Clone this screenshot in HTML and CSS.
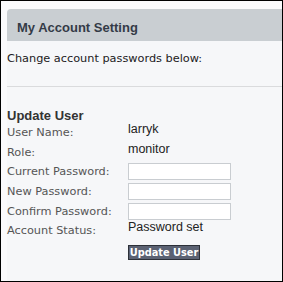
FILE: index.html
```html
<!DOCTYPE html>
<html lang="en">
<head>
    <meta charset="UTF-8">
    <title>My Account Setting</title>
    <link rel="stylesheet" href="styles.css">
</head>
<body>
<div class="panel">
    <div class="panel-header">My Account Setting</div>
    <p class="intro">Change account passwords below:</p>
    <hr class="divider">

    <!-- Update user form -->
    <h3 class="section-title">Update User</h3>
    <form class="user-form" onsubmit="return false;">
        <span class="field-label">User Name:</span>
        <span class="field-value">larryk</span>

        <span class="field-label">Role:</span>
        <span class="field-value">monitor</span>

        <label class="field-label" for="currentPassword">Current Password:</label>
        <input type="password" id="currentPassword">

        <label class="field-label" for="newPassword">New Password:</label>
        <input type="password" id="newPassword">

        <label class="field-label" for="confirmPassword">Confirm Password:</label>
        <input type="password" id="confirmPassword">

        <span class="field-label">Account Status:</span>
        <span class="field-value">Password set</span>

        <button type="submit" class="update-btn">Update User</button>
    </form>
</div>
</body>
</html>
```

FILE: styles.css
```css
/* Account settings page */
html, body {
  margin: 0;
  height: 100%;
}
body {
  box-sizing: border-box;
  border: 1px solid #000;
  background-color: #fafafc;
  padding: 8px 0 0 6px;
  overflow: hidden;
  font-family: "DejaVu Sans", Verdana, sans-serif;
}
.panel {
  height: 100%;
  background-color: #f6f7f9;
  border-radius: 4px 0 0 0;
}
.panel-header {
  height: 32px;
  box-sizing: border-box;
  padding: 11px 0 5px 10px;
  background-color: #c9ced2;
  border-radius: 4px 0 0 0;
  font-family: "Liberation Sans", Arial, sans-serif;
  font-weight: bold;
  font-size: 13px;
  line-height: 16px;
  color: #343b47;
}
.intro {
  margin: 0;
  padding-top: 11px;
  font-size: 11.3px;
  line-height: 14px;
  color: #221a22;
}
.divider {
  margin: 20px 0 0 0;
  border: none;
  border-top: 1px solid #dadbdd;
  height: 0;
}
.section-title {
  margin: 21px 0 0 0;
  font-family: "Liberation Sans", Arial, sans-serif;
  font-size: 13px;
  line-height: 16px;
  color: #333;
}
.user-form {
  display: grid;
  grid-template-columns: 121px auto;
  grid-auto-rows: 17px;
  row-gap: 2.7px;
  align-items: center;
}
.field-label {
  font-size: 11.3px;
  color: #555;
}
.field-value {
  align-self: start;
  font-family: "Liberation Sans", Arial, sans-serif;
  font-size: 12.5px;
  line-height: 11px;
  color: #222;
}
.user-form input {
  width: 103px;
  height: 17px;
  box-sizing: border-box;
  margin: 0;
  padding: 1px 3px;
  border: 1px solid #c9cdd1;
  background: #fff;
  font-size: 11px;
}
.update-btn {
  grid-column: 2;
  justify-self: start;
  margin-top: 4px;
  width: 72px;
  height: 15px;
  padding: 0;
  border: 1px solid #2c3038;
  background-color: #5b6273;
  color: #fff;
  font-family: "DejaVu Sans", Verdana, sans-serif;
  font-weight: bold;
  font-size: 9.8px;
  line-height: 13px;
  cursor: pointer;
}
```
